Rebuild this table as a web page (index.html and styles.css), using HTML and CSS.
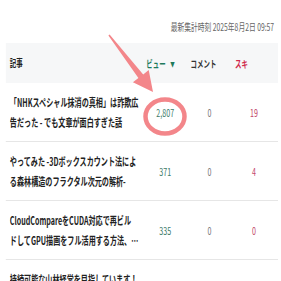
FILE: index.html
```html
<!DOCTYPE html>
<html lang="ja">
<head>
<meta charset="utf-8">
<link rel="stylesheet" href="styles.css">
</head>
<body>
<div class="page">
  <div class="updated">最新集計時刻 2025年8月2日 09:57</div>
  <div class="table">
    <div class="row head">
      <div class="title">記事</div>
      <div class="hcell h-view">ビュー<span class="tri">▼</span></div>
      <div class="hcell h-com">コメント</div>
      <div class="hcell h-like">スキ</div>
    </div>
    <div class="row">
      <div class="title"><span class="line">「NHKスペシャル抹消の真相」は詐欺広</span><span class="line">告だった - でも文章が面白すぎた話</span></div>
      <div class="num view">2,807</div>
      <div class="num com">0</div>
      <div class="num like">19</div>
    </div>
    <div class="row">
      <div class="title"><span class="line">やってみた -3Dボックスカウント法によ</span><span class="line">る森林構造のフラクタル次元の解析-</span></div>
      <div class="num view">371</div>
      <div class="num com">0</div>
      <div class="num like">4</div>
    </div>
    <div class="row">
      <div class="title"><span class="line">CloudCompareをCUDA対応で再ビル</span><span class="line">ドしてGPU描画をフル活用する方法、…</span></div>
      <div class="num view">335</div>
      <div class="num com">0</div>
      <div class="num like">0</div>
    </div>
    <div class="row">
      <div class="title"><span class="line">持続可能な山林経営を目指しています！</span><span class="line">森林データの活用について</span></div>
      <div class="num view">298</div>
      <div class="num com">0</div>
      <div class="num like">3</div>
    </div>
  </div>
</div>
<svg class="overlay" width="281" height="281" viewBox="0 0 281 281">
  <polygon class="arrow" points="109.6,34.5 143.2,74.4 148.7,70.1 153,92 132.9,82.3 138.4,78 108.4,35.5"/>
  <ellipse class="ring" cx="165" cy="116.5" rx="19.5" ry="17"/>
</svg>
</body>
</html>
```
FILE: styles.css
```css
html, body {
  margin: 0;
  padding: 0;
  background: #ffffff;
  overflow: hidden;
}
body {
  width: 281px;
  height: 281px;
  position: relative;
  font-family: "Noto Sans CJK JP", "Noto Sans", sans-serif;
  color: #222222;
}
.page {
  width: 436px;
  transform: scaleX(0.645);
  transform-origin: 0 0;
}
.updated {
  padding: 20px 11px 0 0;
  line-height: 14px;
  font-size: 10.5px;
  color: #666666;
  text-align: right;
  margin-bottom: 9px;
}
.table {
  margin: 0 5px 0 9.3px;
}
.row {
  display: grid;
  grid-template-columns: 215.5px repeat(3, 1fr);
  align-items: center;
  border-bottom: 1px solid #e6e6e6;
  padding: 9px 0;
}
.row.head {
  background: #f6f7f8;
  border-bottom: none;
  height: 40px;
  padding: 0;
  box-sizing: border-box;
  font-size: 10px;
  font-weight: 700;
}
.title {
  padding-left: 6px;
  font-size: 11px;
  font-weight: 700;
  line-height: 20px;
}
.head .title {
  font-size: 10px;
  color: #222222;
}
.line {
  display: block;
  white-space: nowrap;
  overflow: hidden;
}
.hcell {
  padding-left: 2px;
  white-space: nowrap;
}
.h-view { color: #1e7a5c; }
.tri {
  font-size: 7px;
  vertical-align: 1px;
  margin-left: 7px;
}
.h-com { color: #333333; }
.h-like { color: #d0284c; }
.num {
  text-align: center;
  padding-right: 6px;
  font-size: 11px;
  line-height: 20px;
}
.num.view { color: #3c7a68; }
.num.com { color: #777777; }
.num.like { color: #c2456a; }
.overlay {
  position: absolute;
  left: 0;
  top: 0;
  pointer-events: none;
}
.arrow {
  fill: #f3868a;
}
.ring {
  fill: none;
  stroke: #f3868a;
  stroke-width: 4.5;
}
```
